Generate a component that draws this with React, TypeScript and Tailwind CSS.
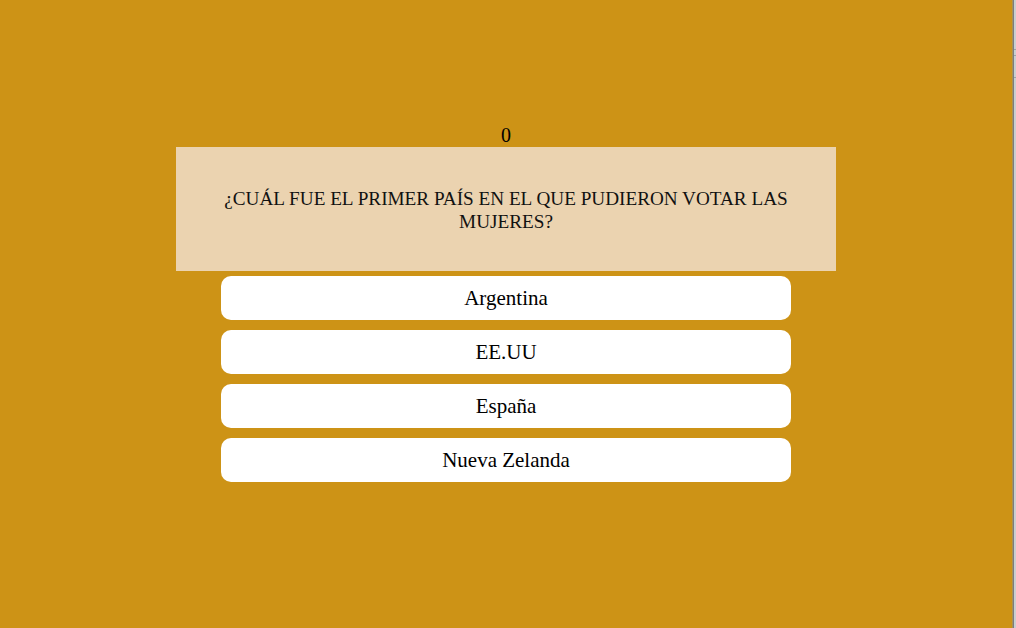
import React, { useState } from 'react';

const question = {
  text: '¿CUÁL FUE EL PRIMER PAÍS EN EL QUE PUDIERON VOTAR LAS MUJERES?',
  options: ['Argentina', 'EE.UU', 'España', 'Nueva Zelanda'],
};

const App = () => {
  const [score, setScore] = useState(0);

  return (
    <div className="flex h-[628px] w-[1016px] overflow-hidden bg-[#cd9316] font-['Liberation_Serif',serif] text-black">
      <div className="flex flex-1 flex-col items-center pt-[124px]">
        {/* Score */}
        <div className="text-[20px] leading-[23px]">{score}</div>

        {/* Question */}
        <div className="w-[660px] bg-[#ebd3b0] px-[40px] pb-[38px] pt-[40px] text-center text-[19.2px] leading-[23px] text-[#111]">
          {question.text}
        </div>

        {/* Answers */}
        <div className="mt-[5px] flex flex-col gap-[10px]">
          {question.options.map((opt) => (
            <button
              key={opt}
              onClick={() => setScore(score + (opt === 'Nueva Zelanda' ? 1 : 0))}
              className="h-[44px] w-[570px] rounded-[10px] bg-white text-center text-[21px] leading-[24px] text-black"
            >
              {opt}
            </button>
          ))}
        </div>
      </div>

      {/* Edge of the window */}
      <div className="flex w-[4px] bg-[#c9cfd1]">
        <div className="w-px bg-[#a8925a]" />
        <div className="w-px bg-[#7d7d7d]" />
        <div className="flex flex-1 flex-col">
          <div className="h-[49px]" />
          <div className="h-px bg-[#9da3a6]" />
          <div className="h-[5px]" />
          <div className="h-px bg-[#9da3a6]" />
          <div className="h-[21px]" />
          <div className="h-px bg-[#9da3a6]" />
        </div>
      </div>
    </div>
  );
};

export default App;
